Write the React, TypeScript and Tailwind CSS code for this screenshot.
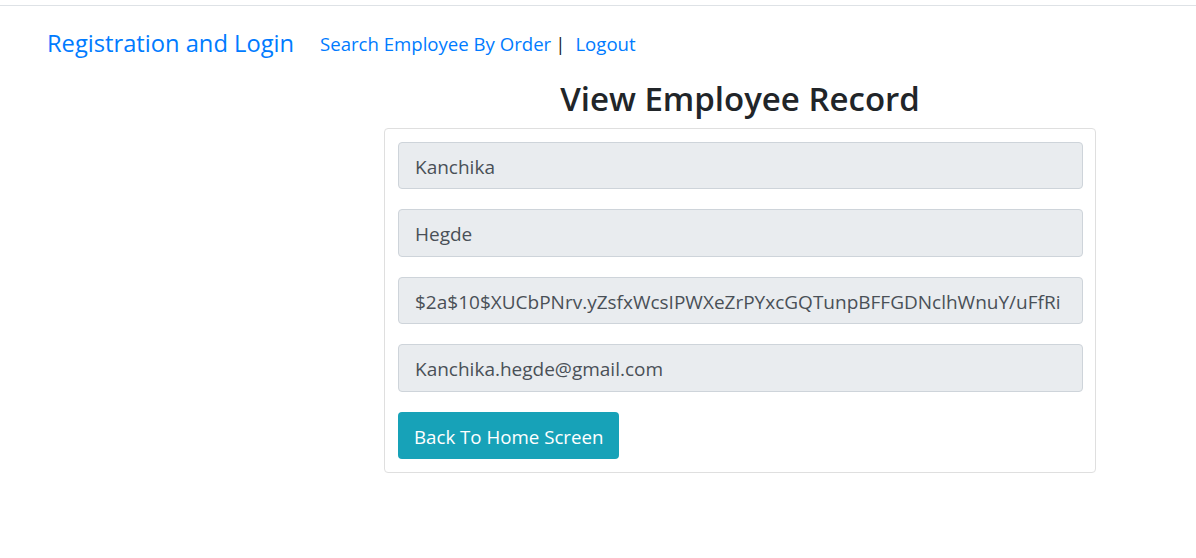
export default function App() {
  const fields = [
    "Kanchika",
    "Hegde",
    "$2a$10$XUCbPNrv.yZsfxWcsIPWXeZrPYxcGQTunpBFFGDNclhWnuY/uFfRi",
    "Kanchika.hegde@gmail.com",
  ];

  return (
    <div className="min-h-[558px] bg-white text-[#212529] [font-family:'Segoe_UI','Open_Sans',sans-serif]">
      {/* top rule */}
      <div className="h-[6px] border-b border-[#dee2e6]" />

      {/* navbar */}
      <nav className="flex items-center h-[76px] pl-[47px]">
        <a className="text-[23.7px] text-[#007bff] mr-[26px]" href="#">
          Registration and Login
        </a>
        <a className="text-[18.6px] text-[#007bff]" href="#">
          Search Employee By Order
        </a>
        <span className="text-[18.6px] text-[#212529] ml-[4px] mr-[10px]">|</span>
        <a className="text-[18.6px] text-[#007bff]" href="#">
          Logout
        </a>
      </nav>

      {/* content */}
      <div className="ml-[384px] w-[712px]">
        <h2 className="text-center text-[33px] font-semibold leading-[1.2] mb-[9px] -mt-[3px]">
          View Employee Record
        </h2>
        <div className="border border-[#dfdfdf] rounded-[4px] p-[13px] pr-[12px]">
          <form className="flex flex-col gap-[20px]">
            {fields.map((v) => (
              <div
                key={v}
                className="h-[47.5px] flex items-center px-[16px] pt-[3px] bg-[#e9ecef] border border-[#ced4da] rounded-[4px] text-[19px] text-[#495057]"
              >
                {v}
              </div>
            ))}
            <div>
              <button
                type="button"
                className="h-[47.5px] px-[16px] pt-[3px] bg-[#17a2b8] text-white text-[18.7px] rounded-[4px]"
              >
                Back To Home Screen
              </button>
            </div>
          </form>
        </div>
      </div>
    </div>
  );
}
